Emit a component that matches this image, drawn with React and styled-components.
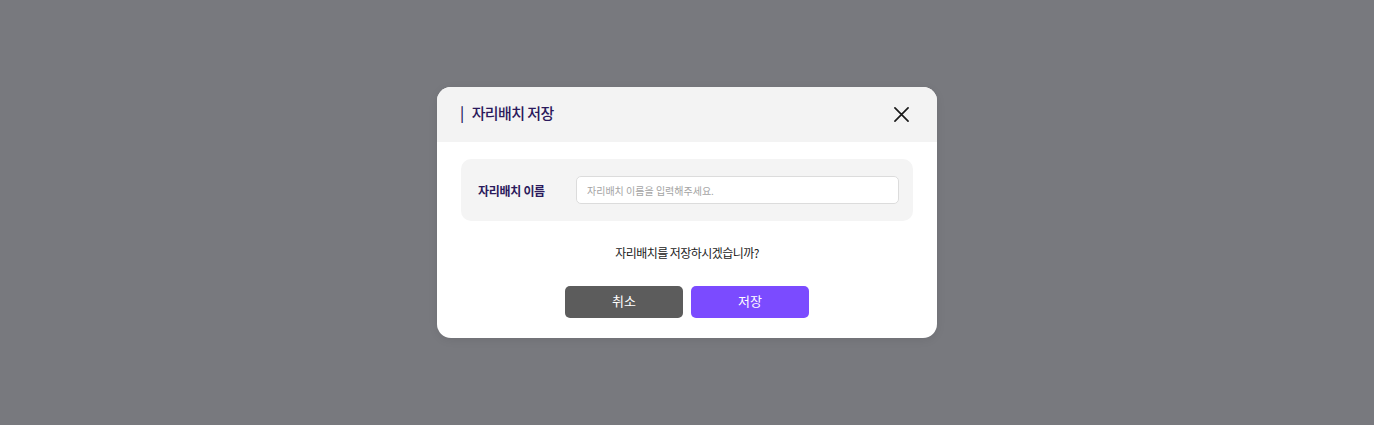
import React, { useState } from 'react';
import styled, { createGlobalStyle } from 'styled-components';

const GlobalStyle = createGlobalStyle`
  html, body {
    margin: 0;
    padding: 0;
  }
  body {
    font-family: "Noto Sans CJK KR", "Noto Sans", sans-serif;
  }
`;

const SaveSeatModal = () => {
  const [name, setName] = useState('');

  return (
    <Overlay>
      <ModalBox>
        <ModalHeader>
          <Title>
            <TitleBar>|</TitleBar>
            자리배치 저장
          </Title>
          <CloseButton type="button" aria-label="닫기">
            <svg width="15" height="15" viewBox="0 0 16 16">
              <path d="M1 1L15 15M15 1L1 15" stroke="#1a1a1a" strokeWidth="1.8" strokeLinecap="round" />
            </svg>
          </CloseButton>
        </ModalHeader>
        <ModalBody>
          <FieldBox>
            <Label>자리배치 이름</Label>
            <NameInput
              value={name}
              onChange={(e) => setName(e.target.value)}
              placeholder="자리배치 이름을 입력해주세요."
            />
          </FieldBox>
          <Question>자리배치를 저장하시겠습니까?</Question>
          <ButtonRow>
            <ActionButton type="button" variant="cancel">취소</ActionButton>
            <ActionButton type="button" variant="save">저장</ActionButton>
          </ButtonRow>
        </ModalBody>
      </ModalBox>
    </Overlay>
  );
};

export default function App() {
  return (
    <>
      <GlobalStyle />
      <SaveSeatModal />
    </>
  );
}

const Overlay = styled.div`
  width: 100%;
  height: 100vh;
  background-color: #78797e;
  display: flex;
  align-items: center;
  justify-content: center;
`;

const ModalBox = styled.div`
  width: 500px;
  background-color: #ffffff;
  border-radius: 14px;
  overflow: hidden;
  box-shadow: 0 2px 10px rgba(0, 0, 0, 0.08);
`;

const ModalHeader = styled.div`
  height: 55px;
  padding: 0 28px 0 23px;
  box-sizing: border-box;
  background-color: #f3f3f3;
  display: flex;
  align-items: center;
  justify-content: space-between;
`;

const Title = styled.h2`
  margin: 0 0 4px;
  font-size: 15px;
  font-weight: 500;
  letter-spacing: -0.6px;
  color: #2b1a5c;
  display: flex;
  align-items: center;
`;

const TitleBar = styled.span`
  margin-right: 8px;
  font-weight: 500;
`;

const CloseButton = styled.button`
  border: none;
  background: none;
  padding: 0;
  width: 16px;
  height: 16px;
  display: flex;
  align-items: center;
  justify-content: center;
  cursor: pointer;
`;

const ModalBody = styled.div`
  padding: 17px 24px 20px;
  display: flex;
  flex-direction: column;
  align-items: stretch;
`;

const FieldBox = styled.div`
  height: 62px;
  padding: 0 14px 0 17px;
  box-sizing: border-box;
  background-color: #f4f4f4;
  border-radius: 10px;
  display: flex;
  align-items: center;
`;

const Label = styled.span`
  width: 98px;
  flex-shrink: 0;
  font-size: 12px;
  font-weight: 700;
  letter-spacing: -0.3px;
  color: #2b1a5c;
`;

const NameInput = styled.input`
  flex: 1;
  height: 28px;
  box-sizing: border-box;
  border: 1px solid #dcdcdc;
  border-radius: 5px;
  background-color: #ffffff;
  padding: 0 10px;
  font-family: "Noto Sans CJK KR", "Noto Sans", sans-serif;
  font-size: 10px;
  color: #333;
  outline: none;
  &::placeholder {
    color: #a4a4a4;
  }
`;

const Question = styled.p`
  margin: 23px 0 0;
  line-height: 17px;
  text-align: center;
  font-size: 12px;
  letter-spacing: -0.55px;
  color: #222;
`;

const ButtonRow = styled.div`
  margin-top: 25px;
  display: flex;
  justify-content: center;
  gap: 8px;
`;

const ActionButton = styled.button`
  width: 118px;
  height: 32px;
  padding: 0 0 3px;
  border: none;
  border-radius: 5px;
  font-family: "Noto Sans CJK KR", "Noto Sans", sans-serif;
  font-size: 13px;
  color: #ffffff;
  cursor: pointer;
  background-color: ${(props) => (props.variant === 'save' ? '#7b4bff' : '#5c5c5c')};
`;
